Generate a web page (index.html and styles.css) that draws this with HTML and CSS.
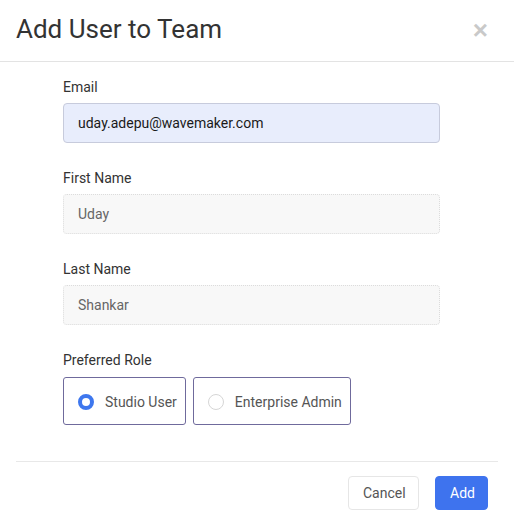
FILE: index.html
```html
<!DOCTYPE html>
<html>
<head>
<meta charset="utf-8">
<link rel="stylesheet" href="styles.css">
</head>
<body>
<div class="modal">
  <div class="modal-header">
    <h1 class="title">Add User to Team</h1>
    <button class="close" aria-label="Close">&times;</button>
  </div>
  <div class="modal-body">
    <div class="field">
      <label class="label">Email</label>
      <div class="input input-email">uday.adepu@wavemaker.com</div>
    </div>
    <div class="field">
      <label class="label">First Name</label>
      <div class="input input-disabled">Uday</div>
    </div>
    <div class="field">
      <label class="label">Last Name</label>
      <div class="input input-disabled">Shankar</div>
    </div>
    <div class="field">
      <label class="label">Preferred Role</label>
      <div class="roles">
        <div class="role"><span class="radio checked"></span><span>Studio User</span></div>
        <div class="role"><span class="radio"></span><span>Enterprise Admin</span></div>
      </div>
    </div>
  </div>
  <div class="modal-footer">
    <button class="btn btn-cancel">Cancel</button>
    <button class="btn btn-add">Add</button>
  </div>
</div>
</body>
</html>
```
FILE: styles.css
```css
* { box-sizing: border-box; }
html, body { margin: 0; padding: 0; background: #fff; }
body { font-family: Roboto, "Noto Sans", Arial, sans-serif; color: #333; width: 514px; height: 522px; }

.modal { width: 514px; }

.modal-header {
  height: 62px;
  border-bottom: 1px solid #e3e3e3;
  display: flex;
  align-items: center;
  justify-content: space-between;
  padding: 0 26px 4px 16px;
}
.title { margin: 0; font-size: 26px; font-weight: 400; color: #333; line-height: 30px; }
.close {
  border: 0; background: none; padding: 0;
  font-size: 26px; font-weight: 700; line-height: 1;
  color: #c9c9c9; font-family: Arial, "Liberation Sans", sans-serif;
  margin-top: 2px;
}

.modal-body { padding: 15px 0 0 63px; }
.field { margin-bottom: 25px; }
.field:last-child { margin-bottom: 0; }
.label { display: block; font-size: 14px; line-height: 20px; color: #333; margin-bottom: 6px; }

.input {
  width: 377px; height: 40px;
  border-radius: 4px;
  padding: 0 14px;
  display: flex; align-items: center;
  font-size: 14px;
}
.input-email { background: #e8edfc; border: 1px solid #c7cbdc; color: #1a1a1a; }
.input-disabled { background: #f8f8f8; border: 1px dotted #dcdcdc; color: #666; }

.roles { display: flex; gap: 7px; margin-top: 7px; }
.role {
  height: 48px;
  border: 1px solid #6f6a9c;
  border-radius: 3px;
  display: flex; align-items: center;
  padding: 2px 8px 0 14px;
  gap: 11px;
  font-size: 14px; color: #555;
}
.radio {
  width: 16px; height: 16px; border-radius: 50%;
  border: 1px solid #d6d6d6; background: #fff;
  flex: none;
}
.radio.checked { border: 4px solid #3e77ee; }

.modal-footer {
  margin: 36px 16px 0 16px;
  border-top: 1px solid #e8e8e8;
  padding: 14px 10px 0 0;
  display: flex; justify-content: flex-end; gap: 16px;
}
.btn {
  height: 34px; border-radius: 4px; font-family: inherit;
  font-size: 14px; padding: 0 14px; cursor: pointer;
}
.btn-cancel { background: #fff; border: 1px solid #e6e6e6; color: #555; width: 71px; }
.btn-add { background: #3e73ee; border: 1px solid #3e73ee; color: #fff; width: 53px; }
```
